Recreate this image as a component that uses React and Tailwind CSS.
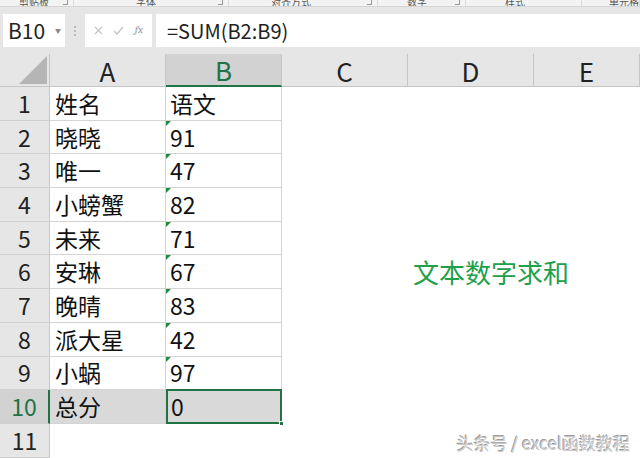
import React from "react";

const FONT = { fontFamily: '"Noto Sans CJK SC", "Noto Sans", sans-serif' };

const groups = [
  { w: "w-[74px]", label: "剪贴板", pl: "pl-[19px]", launcher: true },
  { w: "w-[155px]", label: "字体", pl: "pl-[62px]", launcher: true },
  { w: "w-[149px]", label: "对齐方式", pl: "pl-[42px]", launcher: true },
  { w: "w-[88px]", label: "数字", pl: "pl-[29px]", launcher: true },
  { w: "w-[116px]", label: "样式", pl: "pl-[39px]", launcher: false },
  { w: "flex-1", label: "单元格", pl: "pl-[27px]", launcher: false },
];

const rows = [
  ["姓名", "语文"],
  ["晓晓", "91"],
  ["唯一", "47"],
  ["小螃蟹", "82"],
  ["未来", "71"],
  ["安琳", "67"],
  ["晚晴", "83"],
  ["派大星", "42"],
  ["小蜗", "97"],
  ["总分", "0"],
  ["", ""],
];

function RibbonStrip() {
  return (
    <div className="flex h-[7px] overflow-hidden bg-[#f3f3f3] border-b border-[#d6d6d6]">
      {groups.map((g) => (
        <div key={g.label} className={`${g.w} relative flex items-end border-r border-[#dadada] ${g.pl}`}>
          <span className="text-[10px] leading-[10px] text-[#555] mb-[-1px]">{g.label}</span>
          {g.launcher && (
            <span className="absolute right-[5px] bottom-[1px] w-[5px] h-[5px] border-r border-b border-[#999]"></span>
          )}
        </div>
      ))}
    </div>
  );
}

function FormulaBar() {
  return (
    <div className="flex items-center h-[47px] pt-[7px] pb-[7px] bg-[#e6e6e6]">
      <div className="ml-[3px] w-[62px] h-[33px] bg-white flex items-center justify-between pl-[5px] pr-[4px]">
        <span className="text-[21px] text-[#222] leading-none">B10</span>
        <span className="text-[6px] text-[#888]">▼</span>
      </div>
      <div className="w-[20px] flex flex-col items-center gap-[2px]">
        <span className="w-[2px] h-[2px] bg-[#bbb]"></span>
        <span className="w-[2px] h-[2px] bg-[#bbb]"></span>
        <span className="w-[2px] h-[2px] bg-[#bbb]"></span>
      </div>
      <div className="w-[67px] h-[33px] bg-white flex items-center justify-around px-[4px] text-[#c4c4c4]">
        <svg width="9" height="9" viewBox="0 0 9 9">
          <path d="M1 1L8 8M8 1L1 8" stroke="#c4c4c4" strokeWidth="1.2" />
        </svg>
        <svg width="11" height="9" viewBox="0 0 11 9">
          <path d="M1 5L4 8L10 1" stroke="#c4c4c4" strokeWidth="1.2" fill="none" />
        </svg>
        <span className="text-[11px] italic font-serif text-[#999]">fx</span>
      </div>
      <div className="ml-[4px] flex-1 h-[33px] bg-white flex items-center pl-[11px]">
        <span className="text-[20px] text-[#222] leading-none">=SUM(B2:B9)</span>
      </div>
    </div>
  );
}

function HeaderRow() {
  const cols = [
    { k: "A", w: "w-[116px]" },
    { k: "B", w: "w-[116px]", sel: true },
    { k: "C", w: "w-[126px]" },
    { k: "D", w: "w-[126px]" },
    { k: "E", w: "flex-1" },
  ];
  return (
    <div className="flex h-[33px] bg-[#e6e6e6]">
      <div className="w-[50px] flex items-end justify-end pr-[2px] pb-[2px] border-r border-b border-[#c6c6c6]">
        <svg width="28" height="28" viewBox="0 0 28 28">
          <path d="M28 0L28 28L0 28Z" fill="#b5b5b5" />
        </svg>
      </div>
      {cols.map((c) =>
        c.sel ? (
          <div
            key={c.k}
            className={`${c.w} flex items-center justify-center bg-[#d2d2d2] border-r border-[#c6c6c6] border-b-2 border-b-[#217346] text-[#217346] text-[26px]`}
          >
            {c.k}
          </div>
        ) : (
          <div
            key={c.k}
            className={`${c.w} flex items-center justify-center border-r border-b border-[#c6c6c6] text-[#222] text-[26px]`}
          >
            {c.k}
          </div>
        )
      )}
    </div>
  );
}

function SheetRow({ n, a, b }) {
  const total = n === 10;
  const empty = n === 11;
  const triangle = n >= 2 && n <= 9;
  return (
    <div className="flex h-[33.7px]">
      <div
        className={`w-[50px] flex items-center justify-center text-[23px] leading-none border-b border-[#d0d0d0] ${
          total
            ? "bg-[#d2d2d2] text-[#217346] border-r-2 border-r-[#217346]"
            : "bg-[#e6e6e6] text-[#222] border-r border-r-[#c6c6c6]"
        }`}
      >
        {n}
      </div>
      {empty ? (
        <div className="w-[232px] bg-white"></div>
      ) : (
        <>
          <div
            className={`w-[116px] flex items-center pl-[5px] text-[23px] leading-none text-[#111] border-r border-b border-[#d4d4d4] ${
              total ? "bg-[#d9d9d9]" : "bg-white"
            }`}
          >
            {a}
          </div>
          {total ? (
            <div className="w-[116px] relative flex items-center pl-[3px] text-[23px] leading-none text-[#111] bg-[#d9d9d9] border-2 border-[#217346] -mt-[1px]">
              {b}
              <span className="absolute right-[-4px] bottom-[-4px] w-[5px] h-[5px] bg-[#217346] border border-white"></span>
            </div>
          ) : (
            <div className="w-[116px] relative flex items-center pl-[4px] text-[23px] leading-none text-[#111] bg-white border-r border-b border-[#d4d4d4]">
              {triangle && (
                <span className="absolute top-0 left-0 w-0 h-0 border-t-[5px] border-t-[#1e8a3a] border-r-[5px] border-r-transparent"></span>
              )}
              {b}
            </div>
          )}
        </>
      )}
      <div className="w-[126px] bg-white"></div>
      <div className="w-[126px] bg-white flex items-center pl-[5px] relative z-10">
        {n === 6 && (
          <span className="whitespace-nowrap text-[26px] leading-none text-[#21a04b]">文本数字求和</span>
        )}
      </div>
      <div className="flex-1 bg-white"></div>
    </div>
  );
}

export default function App() {
  return (
    <div className="w-[640px] h-[458px] overflow-hidden bg-white relative" style={FONT}>
      <RibbonStrip />
      <FormulaBar />
      <HeaderRow />
      {rows.map(([a, b], i) => (
        <SheetRow key={i} n={i + 1} a={a} b={b} />
      ))}
      <div className="absolute z-20 right-[10px] bottom-[7px] text-[17px] leading-none text-[#c9c9c9] [text-shadow:1px_1px_0_#ffffff,-1px_-1px_0_#9a9a9a]">
        头条号 / excel函数教程
      </div>
    </div>
  );
}
